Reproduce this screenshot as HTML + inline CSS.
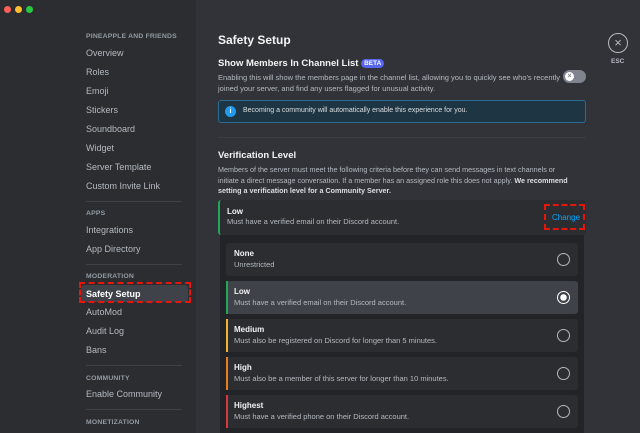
<!DOCTYPE html>
<html><head><style>
*{margin:0;padding:0;box-sizing:border-box}
body{width:640px;height:433px;overflow:hidden;background:#313338;font-family:"Liberation Sans",sans-serif;position:relative;color:#dbdee1}
.side{position:absolute;left:0;top:0;width:196px;height:433px;background:#2b2d31}
.a{position:absolute;white-space:nowrap}
.h{font-size:6.8px;font-weight:bold;color:#949ba4;letter-spacing:.2px}
.it{font-size:9px;color:#b5bac1}
.sep{position:absolute;left:86px;width:96px;height:1px;background:#3f4147}
.dot{position:absolute;top:6px;width:7px;height:7px;border-radius:50%}
.opt{position:absolute;left:226px;width:352px;height:33px;background:#2b2d31;border-radius:3px}
.opt b{position:absolute;left:8px;top:6px;font-size:8px;color:#f2f3f5}
.opt span{position:absolute;left:8px;top:17px;font-size:7.5px;color:#b5bac1;white-space:nowrap}
.opt i{position:absolute;right:8px;top:10px;width:13px;height:13px;border:1.5px solid #b5bac1;border-radius:50%}
.opt .bar{position:absolute;left:0;top:0;width:2px;height:33px}
</style></head><body>
<div class="side">
<div class="dot" style="left:4px;background:#ff5f57"></div>
<div class="dot" style="left:15px;background:#febc2e"></div>
<div class="dot" style="left:26px;background:#28c840"></div>
<div class="a h" style="left:86px;top:33px">PINEAPPLE AND FRIENDS</div>
<div class="a it" style="left:86px;top:48px">Overview</div>
<div class="a it" style="left:86px;top:67px">Roles</div>
<div class="a it" style="left:86px;top:86px">Emoji</div>
<div class="a it" style="left:86px;top:105px">Stickers</div>
<div class="a it" style="left:86px;top:124px">Soundboard</div>
<div class="a it" style="left:86px;top:143px">Widget</div>
<div class="a it" style="left:86px;top:162px">Server Template</div>
<div class="a it" style="left:86px;top:181px">Custom Invite Link</div>
<div class="sep" style="top:201px"></div>
<div class="a h" style="left:86px;top:210px">APPS</div>
<div class="a it" style="left:86px;top:225px">Integrations</div>
<div class="a it" style="left:86px;top:244px">App Directory</div>
<div class="sep" style="top:264px"></div>
<div class="a h" style="left:86px;top:273px">MODERATION</div>
<div class="a" style="left:81px;top:285px;width:107px;height:17px;background:#3f4248;border-radius:3px"></div>
<div class="a" style="left:79px;top:282px;width:112px;height:21px;border:2.5px dashed #e8150a"></div>
<div class="a it" style="left:86px;top:289px;color:#fff;font-weight:bold">Safety Setup</div>
<div class="a it" style="left:86px;top:307px">AutoMod</div>
<div class="a it" style="left:86px;top:326px">Audit Log</div>
<div class="a it" style="left:86px;top:345px">Bans</div>
<div class="sep" style="top:365px"></div>
<div class="a h" style="left:86px;top:375px">COMMUNITY</div>
<div class="a it" style="left:86px;top:389px">Enable Community</div>
<div class="sep" style="top:409px"></div>
<div class="a h" style="left:86px;top:419px">MONETIZATION</div>
</div>

<div class="a" style="left:218px;top:33px;font-size:12px;font-weight:bold;color:#f2f3f5">Safety Setup</div>
<div class="a" style="left:218px;top:58px;font-size:9.5px;font-weight:bold;color:#f2f3f5">Show Members In Channel List <span style="background:#5865f2;color:#fff;font-size:6.5px;padding:1px 3px;border-radius:6px;vertical-align:1px">BETA</span></div>
<div class="a" style="left:218px;top:73px;font-size:7.5px;line-height:10.5px;color:#b5bac1">Enabling this will show the members page in the channel list, allowing you to quickly see who's recently<br>joined your server, and find any users flagged for unusual activity.</div>
<div class="a" style="left:563px;top:70px;width:23px;height:13px;border-radius:7px;background:#80848e"><div style="position:absolute;left:2px;top:2px;width:9px;height:9px;border-radius:50%;background:#fff;color:#80848e;font-size:7px;line-height:9px;text-align:center;font-weight:bold">×</div></div>
<div class="a" style="left:218px;top:100px;width:368px;height:23px;background:#1e3544;border:1px solid #2b6b94;border-radius:3px">
<div style="position:absolute;left:6px;top:5px;width:11px;height:11px;border-radius:50%;background:#1f9cf0;color:#fff;font-size:7px;line-height:11px;text-align:center;font-weight:bold">i</div>
<div style="position:absolute;left:24px;top:6px;font-size:7px;color:#dbdee1;white-space:nowrap">Becoming a community will automatically enable this experience for you.</div></div>
<div class="a" style="left:218px;top:137px;width:368px;height:1px;background:#3a3c42"></div>
<div class="a" style="left:218px;top:150px;font-size:9.5px;font-weight:bold;color:#f2f3f5">Verification Level</div>
<div class="a" style="left:218px;top:165px;font-size:7.2px;line-height:10.5px;color:#b5bac1">Members of the server must meet the following criteria before they can send messages in text channels or<br>initiate a direct message conversation. If a member has an assigned role this does not apply. <b style="color:#dbdee1">We recommend</b><br><b style="color:#dbdee1">setting a verification level for a Community Server.</b></div>
<div class="a" style="left:218px;top:200px;width:368px;height:35px;background:#2b2d31;border-left:2px solid #23a55a;border-radius:3px">
<div style="position:absolute;left:7px;top:7px;font-size:8px;font-weight:bold;color:#f2f3f5">Low</div>
<div style="position:absolute;left:7px;top:17px;font-size:7.5px;color:#b5bac1;white-space:nowrap">Must have a verified email on their Discord account.</div>
<div style="position:absolute;left:332px;top:13px;font-size:8px;color:#00a8fc">Change</div></div>
<div class="a" style="left:544px;top:204px;width:41px;height:26px;border:2.5px dashed #e8150a"></div>
<div class="a" style="left:220px;top:235px;width:364px;height:198px;background:#232428"></div>
<div class="opt" style="top:243px"><b>None</b><span>Unrestricted</span><i></i></div>
<div class="opt" style="top:281px;background:#404249"><div class="bar" style="background:#23a55a"></div><b>Low</b><span>Must have a verified email on their Discord account.</span><i style="border-color:#fff;background:radial-gradient(circle,#fff 3px,transparent 3.5px)"></i></div>
<div class="opt" style="top:319px"><div class="bar" style="background:#f0b232"></div><b>Medium</b><span>Must also be registered on Discord for longer than 5 minutes.</span><i></i></div>
<div class="opt" style="top:357px"><div class="bar" style="background:#e67e22"></div><b>High</b><span>Must also be a member of this server for longer than 10 minutes.</span><i></i></div>
<div class="opt" style="top:395px"><div class="bar" style="background:#da373c"></div><b>Highest</b><span>Must have a verified phone on their Discord account.</span><i></i></div>
<div class="a" style="left:608px;top:33px;width:20px;height:20px;border:1.5px solid #b5bac1;border-radius:50%;color:#b5bac1;font-size:13px;line-height:17px;text-align:center">×</div>
<div class="a" style="left:611px;top:58px;font-size:6.5px;font-weight:bold;color:#b5bac1">ESC</div>
</body></html>
